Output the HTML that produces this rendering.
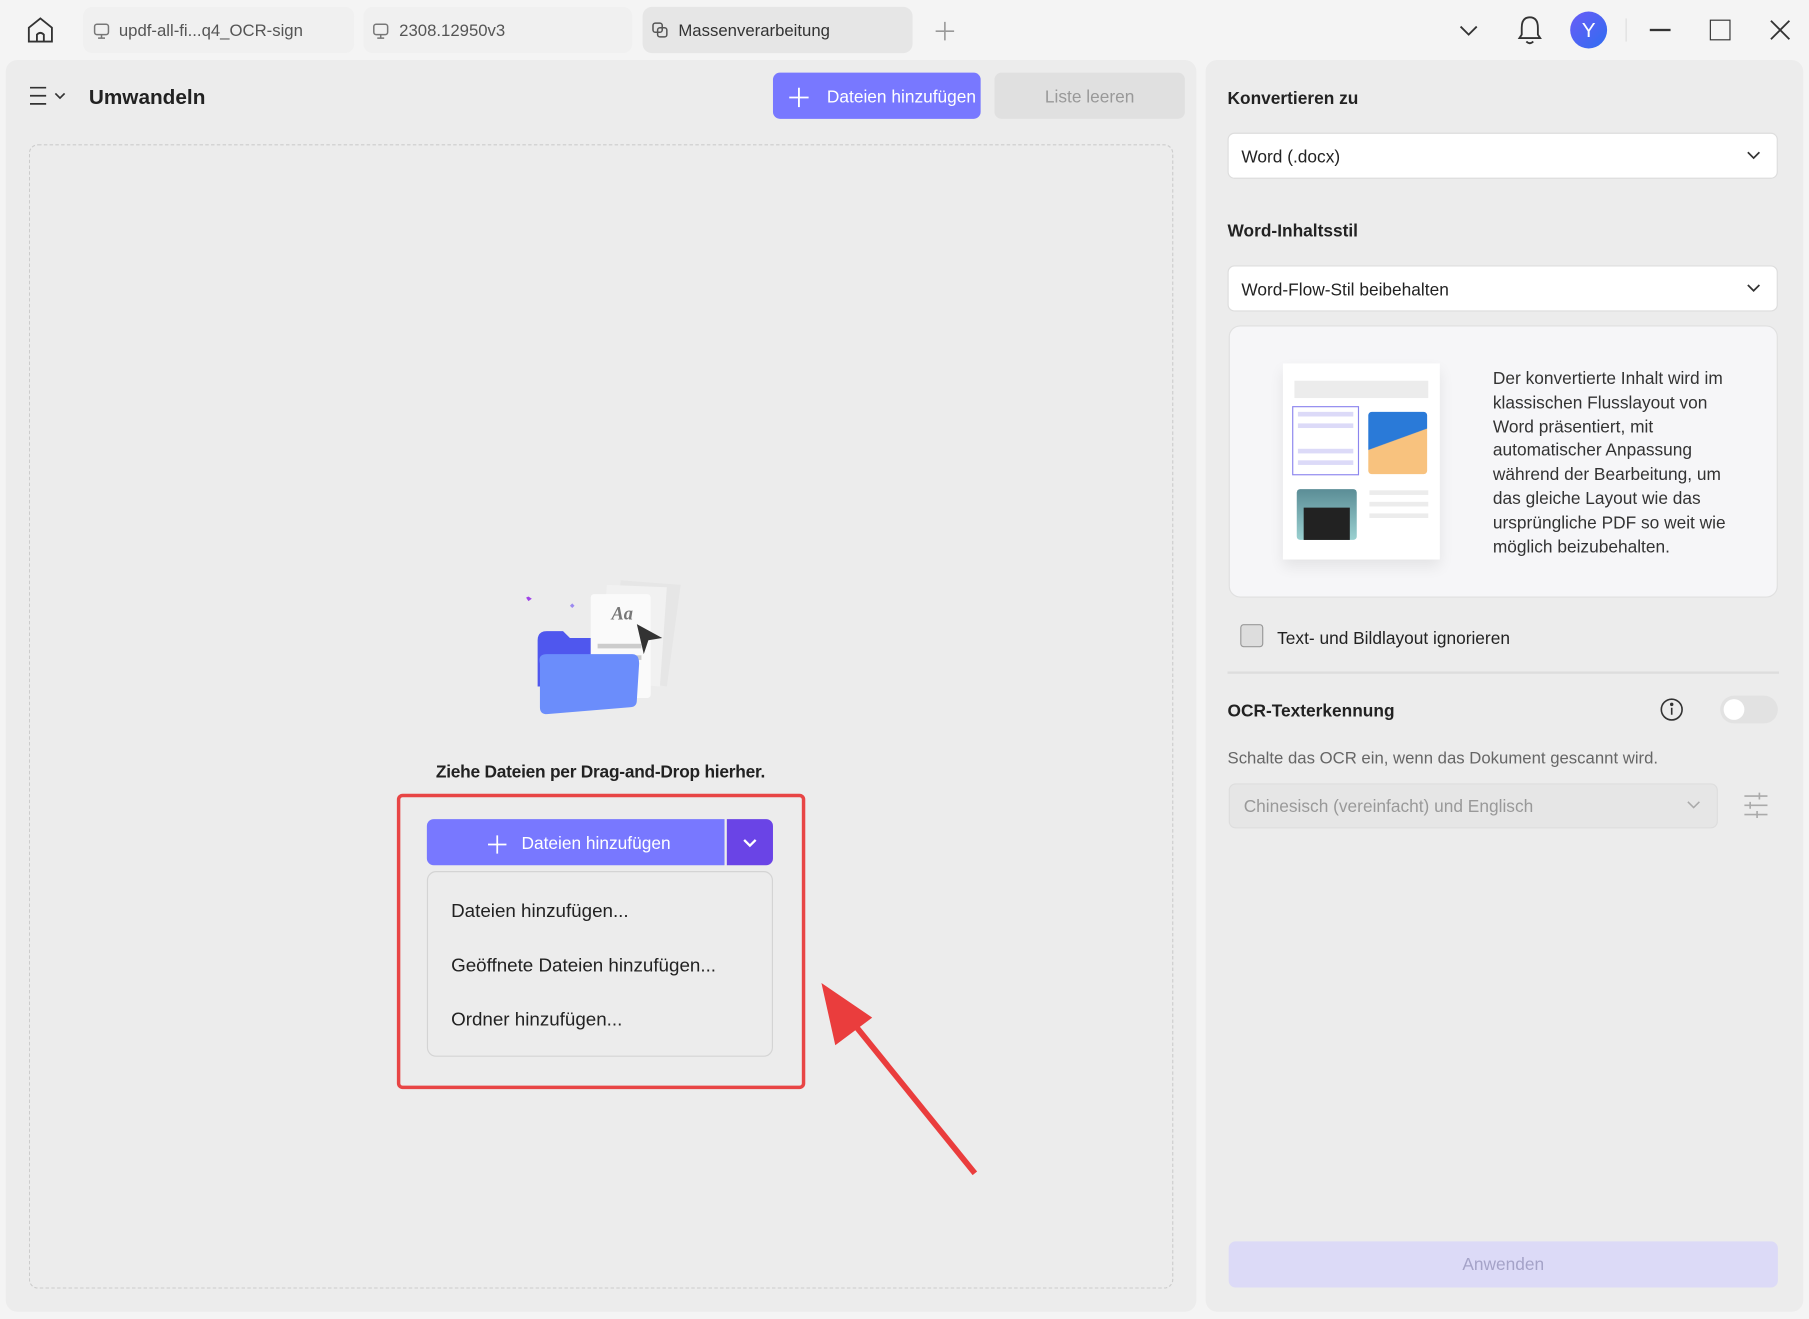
<!DOCTYPE html>
<html><head><meta charset="utf-8"><style>
html,body{margin:0;padding:0;width:1809px;height:1319px;overflow:hidden;background:#f4f4f4}
#w{position:absolute;left:0;top:0;width:1568px;height:1143px;transform:scale(1.15370);transform-origin:0 0;font-family:"Liberation Sans",sans-serif;color:#222}
.a{position:absolute}
.tab{position:absolute;top:6px;height:40px;border-radius:8px;background:#f0f0f0;font-size:14.5px;color:#555;line-height:43px;box-sizing:border-box;padding-left:31px}
.panel{position:absolute;background:#ececec;border-radius:10px}
.sel{position:absolute;left:1064px;width:477px;height:40px;background:#fff;border:1px solid #ddd;border-radius:6px;box-sizing:border-box;font-size:15px;line-height:42px;padding-left:11px;color:#222}
.b{font-weight:bold;font-size:15px}
</style></head><body><div id="w">
<svg class="a" style="left:22px;top:13px" width="26" height="26" viewBox="0 0 26 26" fill="none" stroke="#333" stroke-width="1.6"><path d="M3 11 L13 3 L23 11 V23 H3 Z"/><path d="M10 23 V17 Q13 14 16 17 V23"/></svg>
<div class="tab" style="left:72px;width:235px">updf-all-fi...q4_OCR-sign</div>
<div class="tab" style="left:315px;width:233px">2308.12950v3</div>
<div class="tab" style="left:557px;width:234px;background:#e6e6e6;color:#333">Massenverarbeitung</div>
<svg class="a" style="left:80px;top:19px" width="16" height="16" viewBox="0 0 16 16" fill="none" stroke="#777" stroke-width="1.3"><rect x="2" y="2" width="12" height="9" rx="2"/><path d="M8 11v3M5 14h6"/></svg>
<svg class="a" style="left:322px;top:19px" width="16" height="16" viewBox="0 0 16 16" fill="none" stroke="#777" stroke-width="1.3"><rect x="2" y="2" width="12" height="9" rx="2"/><path d="M8 11v3M5 14h6"/></svg>
<svg class="a" style="left:564px;top:18px" width="16" height="16" viewBox="0 0 16 16" fill="none" stroke="#555" stroke-width="1.3"><rect x="2" y="2" width="8" height="8" rx="2"/><rect x="6" y="6" width="8" height="8" rx="2"/></svg>
<svg class="a" style="left:810px;top:18px" width="18" height="18" viewBox="0 0 18 18" stroke="#999" stroke-width="1.4"><path d="M9 1v16M1 9h16"/></svg>
<svg class="a" style="left:1264px;top:19px" width="18" height="14" viewBox="0 0 18 14" fill="none" stroke="#333" stroke-width="1.6"><path d="M2 4 L9 11 L16 4"/></svg>
<svg class="a" style="left:1314px;top:12px" width="24" height="28" viewBox="0 0 24 28" fill="none" stroke="#333" stroke-width="1.6"><path d="M12 3 C6 3 5 8 5 12 V18 L3 21 H21 L19 18 V12 C19 8 18 3 12 3Z"/><path d="M9 24 Q12 27 15 24"/></svg>
<div class="a" style="left:1361px;top:10px;width:32px;height:32px;border-radius:50%;background:linear-gradient(135deg,#6a5cf7,#2f6df0);color:#fff;font-size:18px;line-height:32px;text-align:center">Y</div>
<div class="a" style="left:1409px;top:16px;width:1px;height:20px;background:#ddd"></div>
<div class="a" style="left:1430px;top:25px;width:18px;height:1.6px;background:#333"></div>
<div class="a" style="left:1482px;top:17px;width:16px;height:16px;border:1.6px solid #333"></div>
<svg class="a" style="left:1534px;top:17px" width="18" height="18" viewBox="0 0 18 18" stroke="#333" stroke-width="1.6"><path d="M1 1L17 17M17 1L1 17"/></svg>

<div class="panel" style="left:5px;top:52px;width:1032px;height:1085px"></div>
<svg class="a" style="left:25px;top:74px" width="34" height="18" viewBox="0 0 34 18" fill="none" stroke="#333" stroke-width="1.5"><path d="M1 2h14M1 9h14M1 16h14M23 7l4 4 4-4"/></svg>
<div class="a" style="left:77px;top:74px;font-size:18px;font-weight:bold">Umwandeln</div>
<div class="a" style="left:670px;top:63px;width:180px;height:40px;background:#7878ff;border-radius:6px;color:#fff;font-size:15px;line-height:44px;text-align:right;box-sizing:border-box;padding-right:4px">Dateien hinzufügen</div>
<svg class="a" style="left:684px;top:76px" width="17" height="17" stroke="#fff" stroke-width="1.6"><path d="M8.5 0v17M0 8.5h17"/></svg>
<div class="a" style="left:862px;top:63px;width:165px;height:40px;background:#e0e0e0;border-radius:6px;color:#999;font-size:15px;line-height:44px;text-align:center">Liste leeren</div>
<div class="a" style="left:25px;top:125px;width:992px;height:992px;border:1.5px dashed #ccc;border-radius:8px;box-sizing:border-box"></div>

<svg class="a" style="left:450px;top:495px" width="150" height="130" viewBox="0 0 150 130">
<path d="M88 8 L140 12 L128 100 L80 92Z" fill="#e6e6e6"/>
<path d="M76 12 L128 14 L122 100 L70 96Z" fill="#f1f1f1"/>
<rect x="62" y="20" width="52" height="90" rx="3" fill="#fafafa"/>
<text x="80" y="42" font-family="Liberation Serif,serif" font-style="italic" font-weight="bold" font-size="16" fill="#777">Aa</text>
<rect x="68" y="63" width="38" height="4" fill="#ccc"/><rect x="68" y="73" width="38" height="4" fill="#ccc"/>
<path d="M102 46 L124 58 L112 60 L108 72Z" fill="#333"/>
<path d="M16 60 Q16 52 24 52 H38 L44 58 H62 V100 H16Z" fill="#4f57ee"/>
<path d="M18 80 Q16 72 24 72 H98 Q104 72 104 80 L102 112 Q102 118 96 118 L24 124 Q18 124 18 118Z" fill="#6b8dfb"/>
<path d="M8 22l3 2 -3 2 -2-3z" fill="#a044e8"/><path d="M46 28l2 2-2 2-2-2z" fill="#9c8af0"/>
</svg>
<div class="a" style="left:0;width:1041px;top:661px;text-align:center;font-size:15px;font-weight:bold;letter-spacing:-0.2px">Ziehe Dateien per Drag-and-Drop hierher.</div>

<div class="a" style="left:344px;top:688px;width:354px;height:256px;border:3.5px solid #e84545;border-radius:5px;box-sizing:border-box"></div>
<div class="a" style="left:370px;top:710px;width:258px;height:40px;background:#7878ff;border-radius:6px 0 0 6px;color:#fff;font-size:15px;line-height:44px;box-sizing:border-box;padding-left:82px">Dateien hinzufügen</div>
<svg class="a" style="left:423px;top:724px" width="16" height="16" stroke="#fff" stroke-width="1.5"><path d="M8 0v16M0 8h16"/></svg>
<div class="a" style="left:630px;top:710px;width:40px;height:40px;background:#6a44e6;border-radius:0 6px 6px 0"></div>
<svg class="a" style="left:643px;top:726px" width="14" height="10" fill="none" stroke="#fff" stroke-width="2"><path d="M2 2l5 5 5-5"/></svg>
<div class="a" style="left:370px;top:755px;width:300px;height:161px;border:1px solid #d4d4d4;border-radius:8px;box-sizing:border-box;background:#ececec"></div>
<div class="a" style="left:391px;top:781px;font-size:16.3px;color:#222">Dateien hinzufügen...</div>
<div class="a" style="left:391px;top:828px;font-size:16.3px;color:#222">Geöffnete Dateien hinzufügen...</div>
<div class="a" style="left:391px;top:875px;font-size:16.3px;color:#222">Ordner hinzufügen...</div>
<svg class="a" style="left:700px;top:840px" width="160" height="190"><line x1="145" y1="177" x2="30" y2="35" stroke="#ea3d3d" stroke-width="5"/><polygon points="12,12 56,42 24,66" fill="#ea3d3d"/></svg>

<div class="panel" style="left:1045px;top:52px;width:518px;height:1085px"></div>
<div class="a b" style="left:1064px;top:77px">Konvertieren zu</div>
<div class="sel" style="top:115px">Word (.docx)</div>
<svg class="a" style="left:1514px;top:131px" width="12" height="8" fill="none" stroke="#333" stroke-width="1.5"><path d="M1 1l5 5 5-5"/></svg>
<div class="a b" style="left:1064px;top:192px">Word-Inhaltsstil</div>
<div class="sel" style="top:230px">Word-Flow-Stil beibehalten</div>
<svg class="a" style="left:1514px;top:246px" width="12" height="8" fill="none" stroke="#333" stroke-width="1.5"><path d="M1 1l5 5 5-5"/></svg>
<div class="a" style="left:1065px;top:282px;width:476px;height:236px;background:#f6f6f8;border:1px solid #e0e0e0;border-radius:10px;box-sizing:border-box"></div>
<div class="a" style="left:1112px;top:315px;width:136px;height:170px;background:#fff;box-shadow:0 6px 12px rgba(0,0,0,.08)"></div>
<div class="a" style="left:1122px;top:330px;width:116px;height:15px;background:#ececec"></div>
<div class="a" style="left:1120px;top:352px;width:58px;height:60px;border:1.5px solid #8c85ee;box-sizing:border-box"></div>
<div class="a" style="left:1125px;top:357px;width:48px;height:4px;background:#dcdaf8;box-shadow:0 10px 0 #dcdaf8,0 32px 0 #dcdaf8,0 42px 0 #dcdaf8"></div>
<div class="a" style="left:1186px;top:357px;width:51px;height:54px;border-radius:3px;background:linear-gradient(160deg,#2a7ad8 45%,#f8c27e 46%)"></div>
<div class="a" style="left:1124px;top:424px;width:52px;height:44px;border-radius:3px;background:linear-gradient(#5b8d96,#9ad0d0)"></div>
<div class="a" style="left:1130px;top:440px;width:40px;height:28px;background:#222"></div>
<div class="a" style="left:1187px;top:425px;width:51px;height:4px;background:#ececec;box-shadow:0 10px 0 #ececec,0 20px 0 #ececec"></div>
<div class="a" style="left:1294px;top:319px;width:216px;font-size:15px;line-height:20.8px;color:#333">Der konvertierte Inhalt wird im klassischen Flusslayout von Word präsentiert, mit automatischer Anpassung während der Bearbeitung, um das gleiche Layout wie das ursprüngliche PDF so weit wie möglich beizubehalten.</div>
<div class="a" style="left:1075px;top:541px;width:20px;height:20px;border:1.5px solid #999;border-radius:3px;background:#ddd;box-sizing:border-box"></div>
<div class="a" style="left:1107px;top:545px;font-size:15px;color:#222">Text- und Bildlayout ignorieren</div>
<div class="a" style="left:1064px;top:582px;width:478px;height:1.5px;background:#ddd"></div>
<div class="a b" style="left:1064px;top:608px">OCR-Texterkennung</div>
<svg class="a" style="left:1438px;top:604px" width="22" height="22" fill="none" stroke="#333" stroke-width="1.4"><circle cx="11" cy="11" r="9"/><path d="M11 9.5v6"/><circle cx="11" cy="6.5" r=".8" fill="#333"/></svg>
<div class="a" style="left:1491px;top:603px;width:50px;height:24px;border-radius:12px;background:#e2e2e2"></div>
<div class="a" style="left:1494px;top:606px;width:18px;height:18px;border-radius:50%;background:#fff"></div>
<div class="a" style="left:1064px;top:650px;font-size:14.5px;color:#666">Schalte das OCR ein, wenn das Dokument gescannt wird.</div>
<div class="a" style="left:1065px;top:679px;width:424px;height:39px;background:#e6e6e6;border:1px solid #ddd;border-radius:6px;box-sizing:border-box;font-size:15px;line-height:40px;padding-left:12px;color:#999">Chinesisch (vereinfacht) und Englisch</div>
<svg class="a" style="left:1462px;top:694px" width="12" height="8" fill="none" stroke="#aaa" stroke-width="1.3"><path d="M1 1l5 5 5-5"/></svg>
<svg class="a" style="left:1511px;top:686px" width="22" height="24" fill="none" stroke="#aaa" stroke-width="1.4"><path d="M1 4h20M1 12h20M1 20h20"/><path d="M14 1v6M6 9v6M12 17v6"/></svg>
<div class="a" style="left:1065px;top:1076px;width:476px;height:40px;background:#dcdaf7;border-radius:6px;color:#a5a3c8;font-size:15px;line-height:42px;text-align:center">Anwenden</div>
</div></body></html>
